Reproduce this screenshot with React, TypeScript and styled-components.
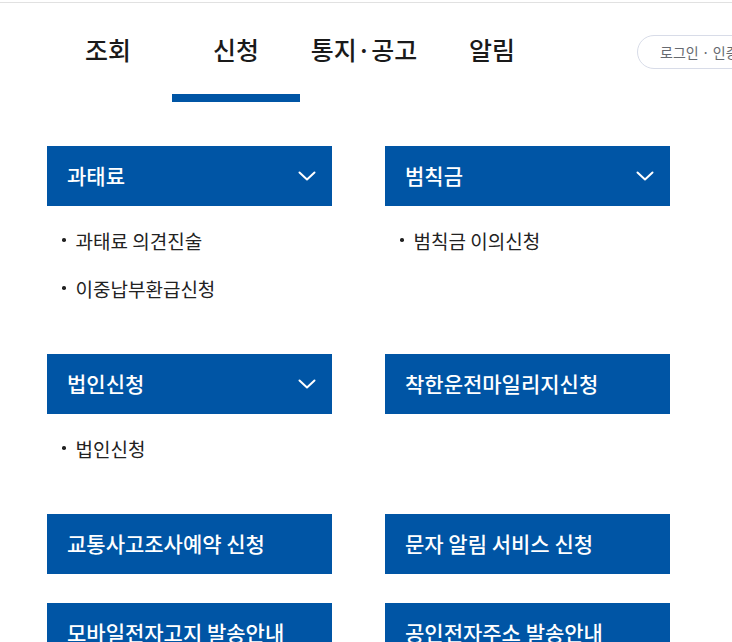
import React from "react";
import styled, { createGlobalStyle } from "styled-components";

const GlobalStyle = createGlobalStyle`
  html, body {
    margin: 0;
    padding: 0;
    background: #ffffff;
  }
  body {
    font-family: "Noto Sans CJK KR", "Noto Sans", sans-serif;
    color: #222222;
    overflow: hidden;
  }
  * { box-sizing: border-box; }
`;

const Page = styled.div`
  width: 732px;
  overflow: hidden;
`;

const TopRule = styled.div`
  margin-top: 2px;
  height: 1px;
  background: #e1e1e1;
`;

const Header = styled.header`
  display: flex;
  align-items: flex-start;
  width: 900px;
  padding-left: 44px;
`;

const Tabs = styled.nav`
  display: flex;
`;

const Tab = styled.a<{ $active?: boolean }>`
  width: 128px;
  height: 99px;
  display: flex;
  justify-content: center;
  align-items: center;
  padding-top: 1px;
  font-size: 25px;
  font-weight: 500;
  color: #1a1a1a;
  text-decoration: none;
  border-bottom: 8px solid ${(p) => (p.$active ? "#0055a5" : "transparent")};
`;

const LoginPill = styled.div`
  margin-left: 81px;
  margin-top: 32px;
  height: 34px;
  padding: 0 22px;
  display: flex;
  align-items: center;
  border: 1px solid #d8dce8;
  border-radius: 17px;
  font-size: 14px;
  color: #666a70;
  white-space: nowrap;
`;

const Content = styled.main`
  display: grid;
  grid-template-columns: 285px 285px;
  column-gap: 53px;
  row-gap: 29px;
  padding: 44px 0 0 47px;
`;

const Group = styled.section``;

const Bar = styled.div`
  height: 60px;
  background: #0055a5;
  color: #ffffff;
  display: flex;
  align-items: center;
  justify-content: space-between;
  padding: 0 16px 3px 20px;
  font-size: 21px;
  font-weight: 500;
`;

const ChevronIcon = styled.svg`
  margin-top: 2px;
`;

const Chevron = () => (
  <ChevronIcon width="18" height="10" viewBox="0 0 18 10" fill="none">
    <path d="M1.5 1.5 L9 8.5 L16.5 1.5" stroke="#ffffff" strokeWidth="2" strokeLinecap="round" strokeLinejoin="round" />
  </ChevronIcon>
);

const List = styled.ul`
  list-style: none;
  margin: 0;
  padding: 10px 0 13px 15px;
`;

const Item = styled.li`
  height: 48px;
  display: flex;
  align-items: center;
  gap: 10px;
  font-size: 19px;
  color: #222222;
  &::before {
    content: "";
    flex: none;
    width: 3.5px;
    height: 3.5px;
    border-radius: 50%;
    background: #222222;
  }
`;

type Menu = { title: string; items?: string[] };

const menus: Menu[] = [
  { title: "과태료", items: ["과태료 의견진술", "이중납부환급신청"] },
  { title: "범칙금", items: ["범칙금 이의신청"] },
  { title: "법인신청", items: ["법인신청"] },
  { title: "착한운전마일리지신청" },
  { title: "교통사고조사예약 신청" },
  { title: "문자 알림 서비스 신청" },
  { title: "모바일전자고지 발송안내" },
  { title: "공인전자주소 발송안내" },
];

export default function App() {
  return (
    <Page>
      <GlobalStyle />
      <TopRule />
      <Header>
        <Tabs>
          <Tab>조회</Tab>
          <Tab $active>신청</Tab>
          <Tab>통지·공고</Tab>
          <Tab>알림</Tab>
        </Tabs>
        <LoginPill>로그인 · 인증서 관리</LoginPill>
      </Header>
      <Content>
        {menus.map((m) => (
          <Group key={m.title}>
            <Bar>
              <span>{m.title}</span>
              {m.items && <Chevron />}
            </Bar>
            {m.items && (
              <List>
                {m.items.map((it) => (
                  <Item key={it}>{it}</Item>
                ))}
              </List>
            )}
          </Group>
        ))}
      </Content>
    </Page>
  );
}
